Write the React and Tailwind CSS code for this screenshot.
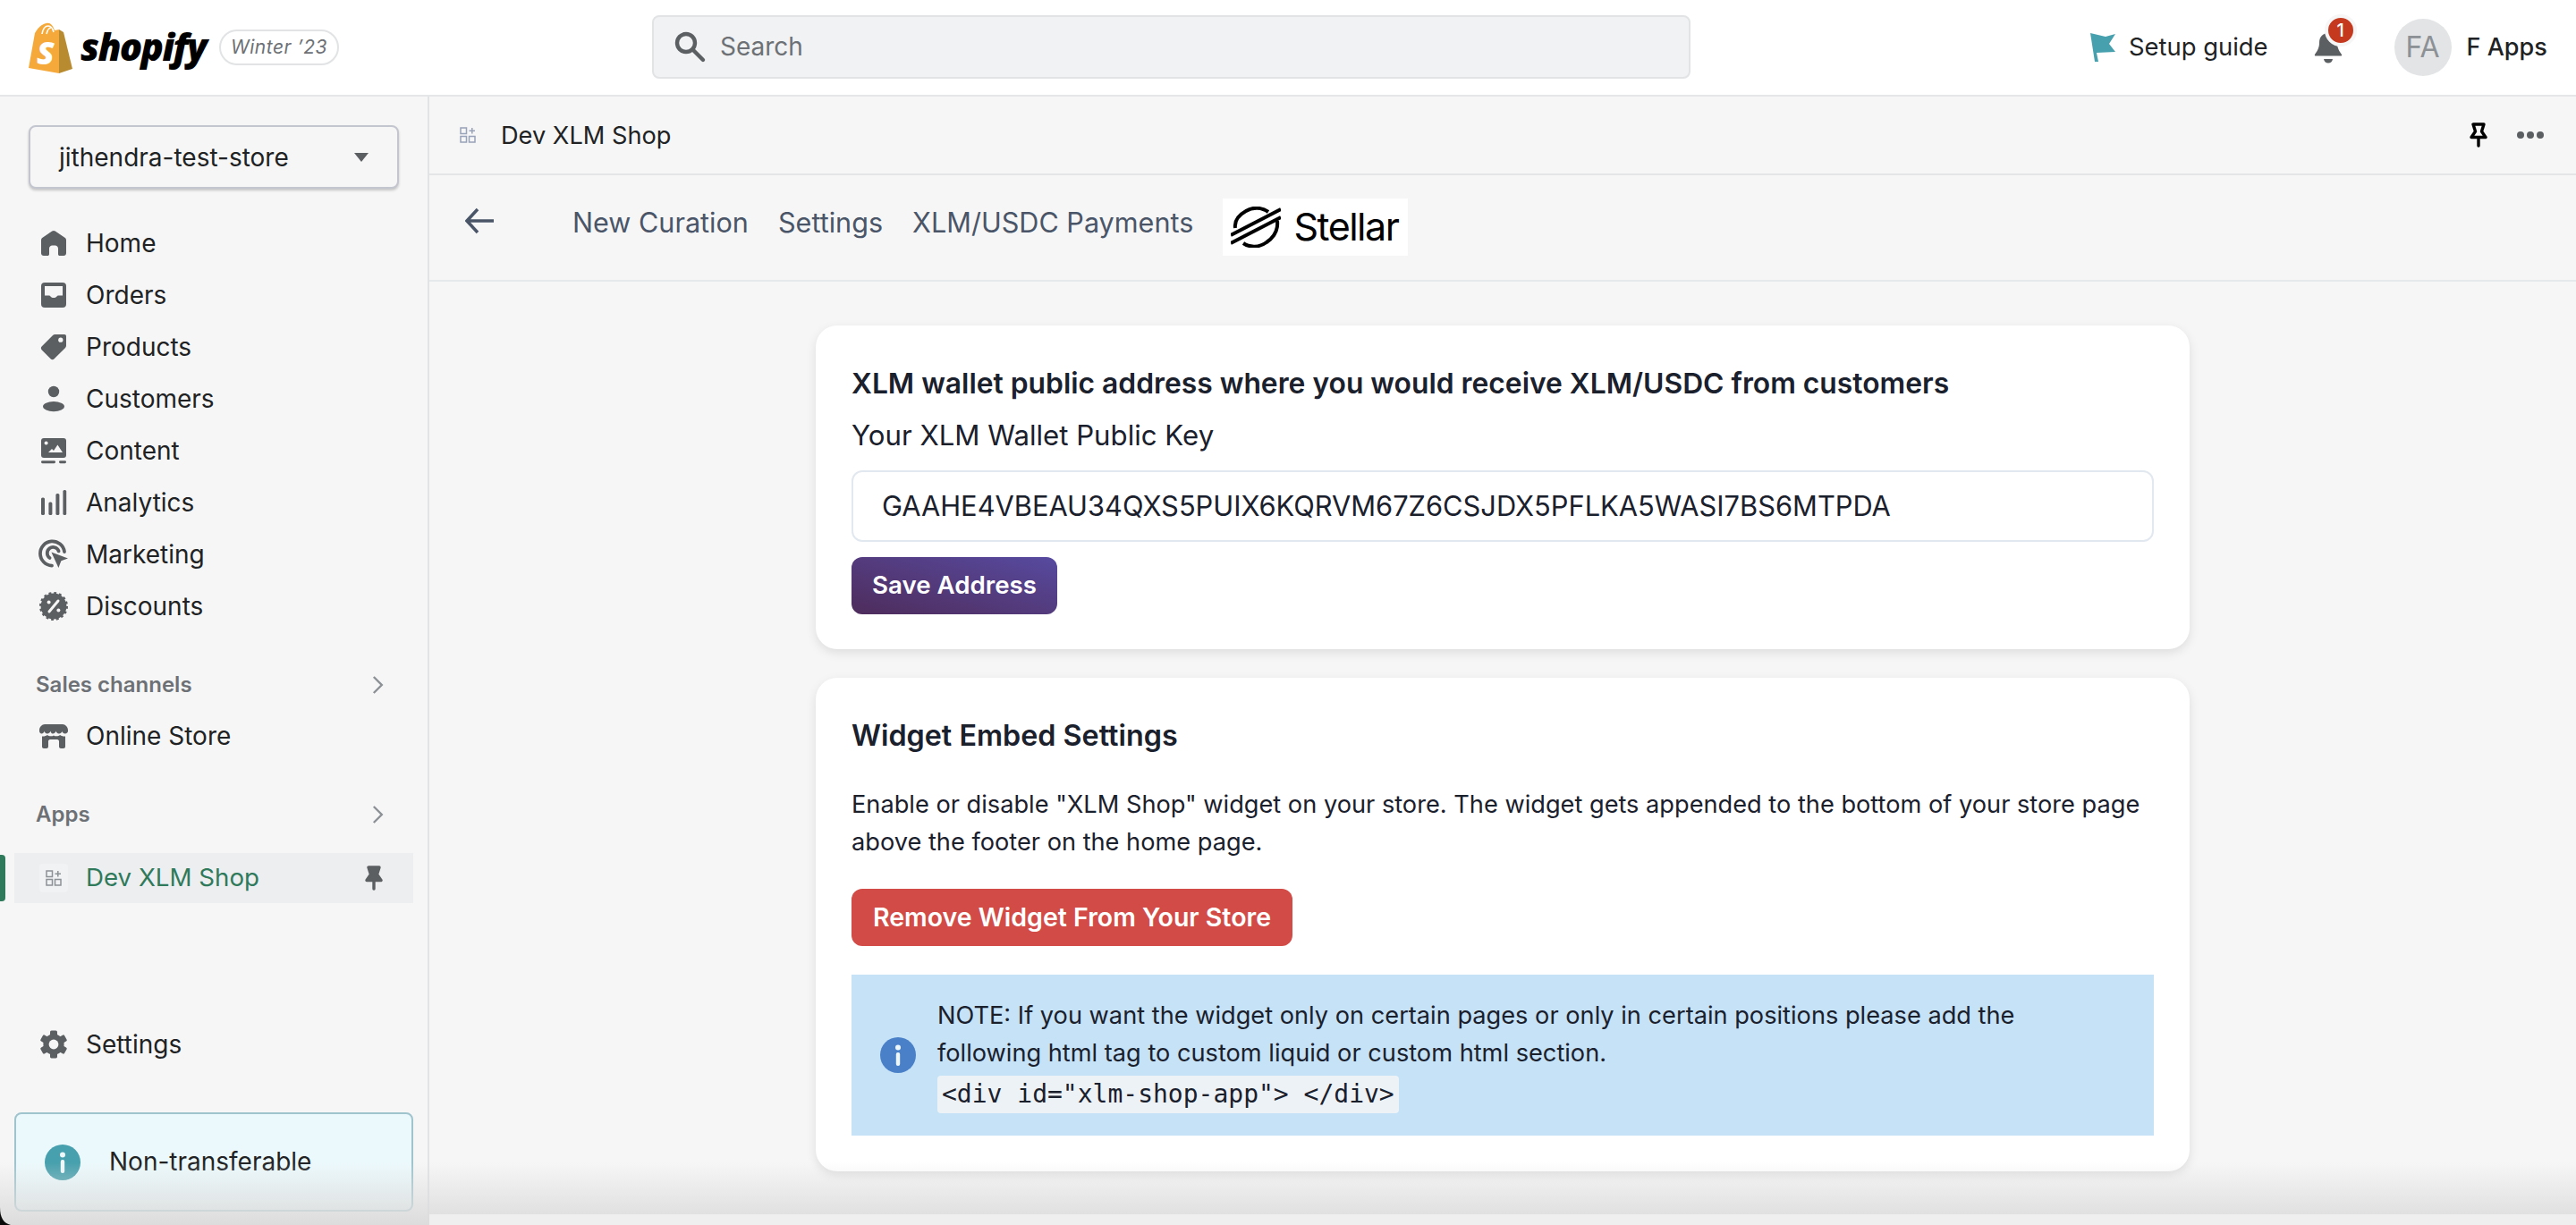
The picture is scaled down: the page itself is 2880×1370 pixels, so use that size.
import React from "react";

const Ic = ({ children }) => (
  <svg viewBox="0 0 20 20" className="w-10 h-10 shrink-0" fill="#5c5f62">{children}</svg>
);
const BG = "#f6f6f7";

const icons = {
  home: <Ic><path d="M17 8.200V15.600c0 .8-.6 1.400-1.400 1.400h-2.200c-.5 0-.9-.4-.9-.9V13c0-1-.8-1.700-1.700-1.700H9.200C8.300 11.300 7.500 12 7.500 13v3.100c0 .5-.4.9-.9.9H4.400C3.600 17 3 16.400 3 15.600V8.200c0-.5.2-.9.6-1.200L9.100 3.300c.5-.4 1.300-.4 1.800 0L16.400 7c.4.3.6.7.6 1.200z" /></Ic>,
  orders: <Ic><rect x="3" y="3" width="14" height="14" rx="2" /><path d="M5 5h10v5.200h-2.500c-.6 0-.9 1.300-2.500 1.300s-1.900-1.300-2.500-1.300H5z" fill={BG} /></Ic>,
  products: <Ic><path d="M17 4v5.200c0 .5-.2 1-.6 1.400l-6.200 6.100c-.5.500-1.300.500-1.800 0L3.300 11.600c-.5-.5-.5-1.300 0-1.800L9.400 3.600C9.800 3.200 10.300 3 10.800 3H16c.6 0 1 .4 1 1z" /><circle cx="13.900" cy="6.100" r="1.300" fill={BG} /></Ic>,
  customers: <Ic><circle cx="10" cy="6" r="3.100" /><ellipse cx="10" cy="14.300" rx="6" ry="2.800" /></Ic>,
  content: <Ic><rect x="3" y="3" width="14" height="11" rx="1.500" /><circle cx="5.800" cy="5.800" r="1" fill={BG} /><path d="M7 11l2-2 1 1 2.200-3.200L15 11z" fill={BG} /><rect x="3" y="15.600" width="8" height="1.500" rx=".7" /><rect x="13" y="15.600" width="4" height="1.500" rx=".7" /></Ic>,
  analytics: <Ic><rect x="3" y="7.200" width="2" height="9.800" rx=".8" /><rect x="7.200" y="9.700" width="2" height="7.300" rx=".8" /><rect x="11.200" y="5" width="2" height="12" rx=".8" /><rect x="15.200" y="3" width="1.900" height="14" rx=".8" /></Ic>,
  marketing: <Ic><path d="M9 16.300A6.800 6.800 0 1 1 16 8.500" fill="none" stroke="#5c5f62" strokeWidth="1.900" strokeLinecap="round" /><path d="M7.800 12A3.300 3.300 0 1 1 12.800 8.200" fill="none" stroke="#5c5f62" strokeWidth="1.900" strokeLinecap="round" /><path d="M8.700 8.800l9.300 3.500-3.800 1.300-1.500 3.900z" /></Ic>,
  discounts: <Ic><circle cx="10" cy="10" r="7.200" /><circle cx="10" cy="10" r="7.400" fill="none" stroke="#5c5f62" strokeWidth="1.200" strokeDasharray="1.400 1.500" /><path d="M7.500 13l5-6" stroke={BG} strokeWidth="1.500" strokeLinecap="round" /><circle cx="7.300" cy="7.800" r="1" fill={BG} /><circle cx="12.700" cy="12.200" r="1" fill={BG} /></Ic>,
  store: <Ic><path d="M5 3.500h10c1.500 0 3 1.600 3 3.200v.5c0 .8-.7 1.500-1.600 1.500-.9 0-1.700-.7-1.700-1.500 0 .8-.8 1.500-1.700 1.500-1 0-1.500-.7-1.700-1.500-.2.800-.9 1.500-1.800 1.500S8.500 8 8.300 7.200C8.100 8 7.300 8.700 6.400 8.700S4.900 8 4.800 7.200C4.700 8 4 8.700 3.300 8.700 2.500 8.700 2 8 2 7.200v-.5C2 5.100 3.500 3.500 5 3.500z" /><path d="M3.500 10.200c1 .2 2.100-.1 2.900-.7.9.7 2.600.9 3.600.2 1 .7 2.700.5 3.600-.2.800.6 1.900.9 2.900.7V16c0 .6-.4 1-1 1h-1.500c-.5 0-1-.4-1-1v-3c0-.5-.4-1-1-1H8c-.6 0-1 .5-1 1v3c0 .6-.5 1-1 1H4.500c-.6 0-1-.4-1-1z" /></Ic>,
  gear: <Ic>{[0, 60, 120, 180, 240, 300].map((a) => <rect key={a} x="8" y="2.300" width="4" height="4" rx=".8" transform={`rotate(${a} 10 10)`} />)}<circle cx="10" cy="10" r="5.800" /><circle cx="10" cy="10" r="2.700" fill={BG} /></Ic>,
};

const AppIcon = ({ c = "#8c9196" }) => (
  <svg viewBox="0 0 20 20" className="w-5 h-5 shrink-0" fill="none" stroke={c} strokeWidth="1.500">
    <rect x="2" y="2" width="6.500" height="6.500" /><rect x="2" y="11.500" width="6.500" height="6.500" /><rect x="11.500" y="11.500" width="6.500" height="6.500" /><path d="M11.500 5.200h6.500M14.800 2v6.500" />
  </svg>
);

const Pin = ({ c = "#000", filled }) => (
  <svg viewBox="0 0 20 28" className="w-5 h-7" fill={filled ? c : "none"} stroke={c} strokeWidth="3.400" strokeLinejoin="round" strokeLinecap="round">
    <path d="M4 2h12l-2.500 8 4.500 6.500H2L6.500 10z" /><path d="M10 17v9" />
  </svg>
);

const Item = ({ icon, label }) => (
  <div className="flex items-center h-[58px] pl-10 gap-4 text-[28px] text-[#202223]">
    {icons[icon]}<span>{label}</span>
  </div>
);

const Chevron = () => (
  <svg viewBox="0 0 20 20" className="w-6 h-6" fill="none" stroke="#8c9196" strokeWidth="2"><path d="M6.500 2.500L14 10l-7.500 7.500" /></svg>
);

const Info = ({ bg, size, cls }) => (
  <svg viewBox="0 0 40 40" className={cls} style={{ width: size, height: size }}>
    <circle cx="20" cy="20" r="20" fill={bg} />
    <circle cx="20" cy="11.500" r="3" fill="#eef8fb" />
    <rect x="17.800" y="17" width="4.400" height="15" rx="2" fill="#eef8fb" />
  </svg>
);

export default function App() {
  return (
    <div className="relative w-[2880px] h-[1370px] overflow-hidden flex flex-col bg-[#f6f6f7] font-['Inter','Liberation_Sans',sans-serif]">
      {/* top bar */}
      <header className="h-[108px] shrink-0 bg-white border-b-2 border-[#e5e6e8] flex items-center">
        <div className="w-[729px] shrink-0 flex items-center pl-8">
          <svg viewBox="0 0 49 57" className="w-[49px] h-[57px] shrink-0">
            <path d="M7 12L0 51l34 6V8L29 9C27 3 24 0 20 1 14 2 10 7 7 12z" fill="#f5a93b" />
            <path d="M34 8l5 3 10 41-15 5z" fill="#b98b30" />
            <path d="M15 13c1-6 4-9 7-9 3 0 5 3 6 7" fill="none" stroke="#fff" strokeWidth="1.500" />
            <path d="M20 13c1-4 3-7 5-7" fill="none" stroke="#fff" strokeWidth="1.500" />
            <text x="9" y="47" fontSize="36" fontWeight="800" fontStyle="italic" fontFamily="Open Sans" fill="#fff">S</text>
          </svg>
          <span className="ml-[9px] -mt-[3px] text-[42px] leading-none font-extrabold italic tracking-[-1.700px] text-black font-['Open_Sans',sans-serif]">shopify</span>
          <span className="ml-[15px] h-10 w-[134px] flex items-center justify-center rounded-full border-2 border-[#e1e3e5] text-[21px] italic text-[#6d7175] tracking-[0.500px]">Winter ’23</span>
        </div>
        <div className="w-[1161px] h-[71px] -mt-[2px] shrink-0 bg-[#f1f2f4] border-2 border-[#e1e3e5] rounded-lg flex items-center pl-5 gap-[14px]">
          <svg viewBox="0 0 20 20" className="w-10 h-10" fill="none" stroke="#5c5f62" strokeWidth="2.200"><circle cx="8" cy="8" r="5" /><path d="M12 12l5.500 5.500" strokeLinecap="round" strokeWidth="2.200" /></svg>
          <span className="text-[28px] text-[#6d7175]">Search</span>
        </div>
        <div className="flex-1 flex items-center pl-[447px]">
          <svg viewBox="0 0 28 32" className="w-7 h-8 shrink-0"><path d="M0 0l17 4 11-3-7 11 7 9-21 1 2 10H5z" fill="#47a0ad" /></svg>
          <span className="ml-[15px] text-[27.400px] text-[#202223]">Setup guide</span>
          <div className="relative ml-[51px] w-8 h-9">
            <svg viewBox="0 0 32 36" className="w-8 h-9"><path d="M16 2c6 0 10 4 10 11 0 6 3 10 5 13 .5.800 0 1.500-1 1.500H2c-1 0-1.500-.7-1-1.500 2-3 5-7 5-13C6 6 10 2 16 2z" fill="#5c5f62" /><path d="M11 31h10c-.5 3-2.500 4.500-5 4.500s-4.500-1.500-5-4.500z" fill="#5c5f62" /></svg>
            <span className="absolute -top-[19px] left-[12px] w-[28px] h-[28px] box-content rounded-full bg-[#c5391f] border-4 border-[#f6f6f7] flex items-center justify-center text-white text-[20px] font-medium">1</span>
          </div>
          <span className="ml-[58px] w-16 h-16 rounded-full bg-[#e3e4e6] flex items-center justify-center text-[#8c9196] text-[32px]">FA</span>
          <span className="ml-[17px] text-[27px] font-medium text-[#202223]">F Apps</span>
        </div>
      </header>

      <div className="flex flex-1 min-h-0">
        {/* sidebar */}
        <aside className="w-[480px] shrink-0 border-r-2 border-[#e1e3e5] flex flex-col px-0">
          <div className="mx-8 mt-[32px] mb-[32px] h-[71px] rounded-lg border-2 border-[#c4c6cf] shadow-[0_2px_3px_rgba(0,0,0,0.2)] flex items-center justify-between pl-[32px] pr-[32px] bg-[#f6f6f7]">
            <span className="text-[28px] text-[#202223]">jithendra-test-store</span>
            <span className="w-0 h-0 border-l-[8px] border-r-[8px] border-t-[10px] border-l-transparent border-r-transparent border-t-[#5c5f62]" />
          </div>
          <Item icon="home" label="Home" />
          <Item icon="orders" label="Orders" />
          <Item icon="products" label="Products" />
          <Item icon="customers" label="Customers" />
          <Item icon="content" label="Content" />
          <Item icon="analytics" label="Analytics" />
          <Item icon="marketing" label="Marketing" />
          <Item icon="discounts" label="Discounts" />
          <div className="mt-10 h-[38px] flex items-center justify-between pl-10 pr-[44px] text-[24px] font-semibold text-[#6d7175]">
            <span>Sales channels</span><Chevron />
          </div>
          <div className="mt-[9px]"><Item icon="store" label="Online Store" /></div>
          <div className="mt-10 h-[38px] flex items-center justify-between pl-10 pr-[44px] text-[24px] font-semibold text-[#6d7175]">
            <span>Apps</span><Chevron />
          </div>
          <div className="relative mt-[24px] ml-4 mr-4 h-[56px] bg-[#edeef0] flex items-center pl-[28px] pr-[34px] text-[27.700px] text-[#2f7a5b]">
            <span className="absolute -left-4 top-[2px] w-[6px] h-[52px] bg-[#2f7a5b] rounded-r" />
            <span className="w-[32px] h-[32px] flex items-center justify-center bg-[#f1f2f3] rounded"><AppIcon /></span>
            <span className="ml-5 flex-1">Dev XLM Shop</span>
            <Pin c="#5c5f62" filled />
          </div>
          <div className="mt-auto"><Item icon="gear" label="Settings" /></div>
          <div className="mt-[47px] mb-[15px] mx-4 h-[111px] rounded-lg border-2 border-[#9fc4cd] bg-[#ecf9fc] flex items-center pl-[32px] gap-8 text-[28px] text-[#202223]">
            <Info bg="#47a0ad" size={40} cls="shrink-0" />
            <span className="-mt-[2px]">Non-transferable</span>
          </div>
        </aside>

        {/* main */}
        <main className="flex-1 min-w-0 flex flex-col">
          <div className="h-[88px] shrink-0 border-b-2 border-[#e4e5e7] flex items-center pl-[33px] pr-[36px]">
            <AppIcon c="#98a2b8" />
            <span className="ml-[27px] mt-[3px] text-[27.200px] text-[#202223]">Dev XLM Shop</span>
            <span className="ml-auto mr-[33px] flex"><Pin /></span>
            <span className="flex gap-[3px]">
              <i className="w-2 h-2 rounded-full bg-[#5c5f62]" />
              <i className="w-2 h-2 rounded-full bg-[#5c5f62]" />
              <i className="w-2 h-2 rounded-full bg-[#5c5f62]" />
            </span>
          </div>
          <div className="h-[119px] shrink-0 border-b-2 border-[#e6e9ec] flex items-center pl-10">
            <svg viewBox="0 0 32 32" className="w-8 h-8 -mt-[15px]" fill="none" stroke="#4a5568" strokeWidth="3.500"><path d="M14 3L2 16l12 13M2 16h30" /></svg>
            <div className="ml-[88px] flex items-center gap-[33px] -mt-[12px] text-[30.600px] text-[#4a5568]">
              <span>New Curation</span><span>Settings</span><span>XLM/USDC Payments</span>
            </div>
            <div className="ml-[33px] w-[207px] h-[64px] bg-white flex items-center pl-[9px] gap-[14px] -mt-[2px]">
              <svg viewBox="0 0 56 46" className="w-[56px] h-[46px] shrink-0" fill="none" stroke="#000" strokeWidth="4">
                <path d="M42 6C35 1 25 0 17 5 8 10 4 17 5 24" />
                <path d="M14 41c7 5 18 5 26-1 9-6 13-14 12-24" />
                <path d="M0 32L56 3M0 41L56 12" />
              </svg>
              <span className="text-[43px] leading-none tracking-[-1.500px] text-black">Stellar</span>
            </div>
          </div>

          <div className="flex-1 pl-[432px] pt-[49px] flex flex-col gap-8 text-[#1a202c]">
            <section className="w-[1536px] h-[362px] bg-white rounded-3xl shadow-[0_4px_12px_rgba(0,0,0,0.1)] pl-10 pr-10 pt-[48px]">
              <h2 className="text-[31.800px] leading-[34px] font-semibold">XLM wallet public address where you would receive XLM/USDC from customers</h2>
              <p className="mt-[23px] text-[31.200px] leading-[36px]">Your XLM Wallet Public Key</p>
              <div className="mt-[21px] h-[80px] rounded-xl border-2 border-[#e2e8f0] flex items-center pl-[32px] text-[30.800px]">GAAHE4VBEAU34QXS5PUIX6KQRVM67Z6CSJDX5PFLKA5WASI7BS6MTPDA</div>
              <button className="mt-[17px] h-16 px-[23px] rounded-xl text-white text-[27.700px] font-semibold bg-gradient-to-tr from-[#4e2c5c] to-[#574aa0]">Save Address</button>
            </section>
            <section className="w-[1536px] h-[552px] bg-white rounded-3xl shadow-[0_4px_12px_rgba(0,0,0,0.1)] pl-10 pr-10 pt-[46px]">
              <h2 className="text-[32.300px] leading-[38px] font-semibold">Widget Embed Settings</h2>
              <p className="mt-[37px] text-[27.200px] leading-[42px]">Enable or disable "XLM Shop" widget on your store. The widget gets appended to the bottom of your store page above the footer on the home page.</p>
              <button className="mt-[31px] h-16 px-6 rounded-xl text-white text-[28.500px] font-semibold bg-[#d34b46] block">Remove Widget From Your Store</button>
              <div className="mt-8 h-[180px] bg-[#c5e2f7] flex items-center pl-[32px]">
                <Info bg="#4a80c8" size={40} cls="shrink-0" />
                <div className="ml-[24px] text-[27.200px] leading-[42px] text-[#1a202c]">
                  <p>NOTE: If you want the widget only on certain pages or only in certain positions please add the</p>
                  <p>following html tag to custom liquid or custom html section.</p>
                  <code className="mt-[4px] block w-fit h-[42px] px-[5px] bg-[#edf2f7] rounded font-['DejaVu_Sans_Mono',monospace] text-[28px] leading-[42px]">{'<div id="xlm-shop-app"> </div>'}</code>
                </div>
              </div>
            </section>
          </div>
        </main>
      </div>

      {/* window-bottom shading */}
      <div className="absolute left-0 right-0 bottom-0 h-[70px] bg-gradient-to-b from-transparent to-[#dcdcdc] pointer-events-none" />
      <div className="absolute left-[480px] right-0 bottom-0 h-[12px] bg-[#efefef] pointer-events-none" />
      <svg viewBox="0 0 12 20" className="absolute left-0 bottom-0 w-3 h-5 pointer-events-none"><path d="M0 0c0 12 4 18 12 20H0z" fill="#0a0a0a" /></svg>
    </div>
  );
}
